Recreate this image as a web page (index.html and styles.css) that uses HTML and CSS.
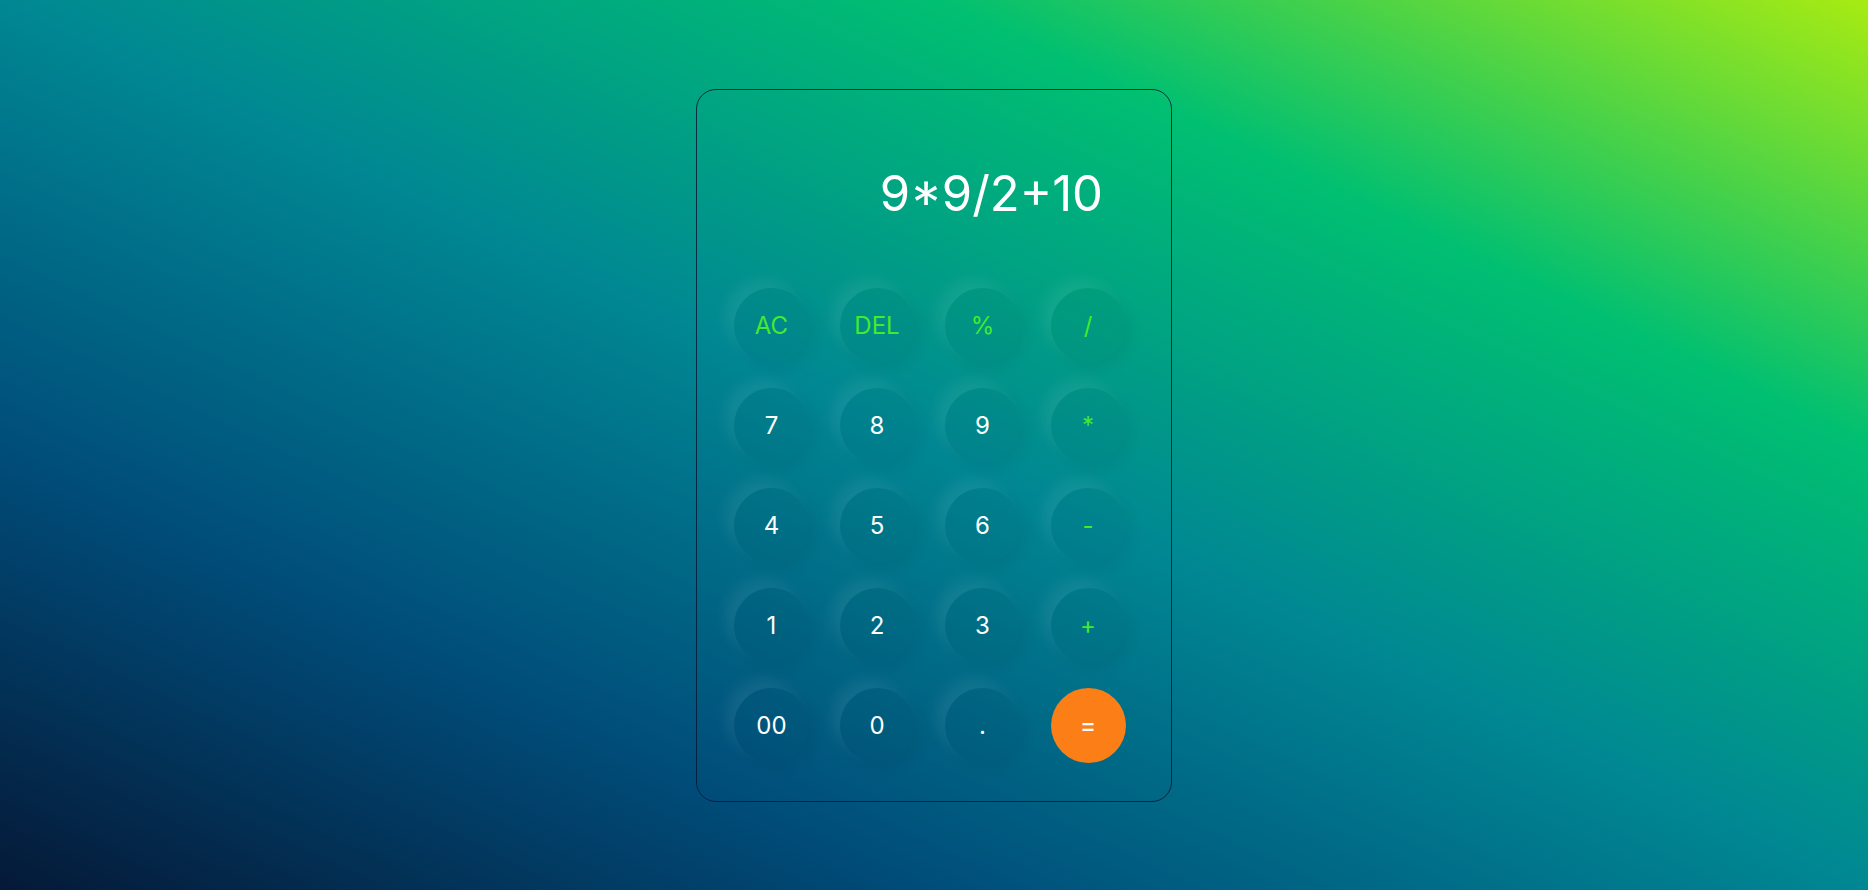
FILE: index.html
```html
<!DOCTYPE html>
<html lang="en">
<head>
<meta charset="utf-8">
<title>Calculator</title>
<link rel="stylesheet" href="styles.css">
</head>
<body>
<div class="page">
  <div class="calc">
    <div class="display">9*9/2+10</div>
    <div class="keys">
      <button class="key op">AC</button>
      <button class="key op">DEL</button>
      <button class="key op">%</button>
      <button class="key op">/</button>
      <button class="key">7</button>
      <button class="key">8</button>
      <button class="key">9</button>
      <button class="key op">*</button>
      <button class="key">4</button>
      <button class="key">5</button>
      <button class="key">6</button>
      <button class="key op">-</button>
      <button class="key">1</button>
      <button class="key">2</button>
      <button class="key">3</button>
      <button class="key op">+</button>
      <button class="key">00</button>
      <button class="key">0</button>
      <button class="key">.</button>
      <button class="key equal">=</button>
    </div>
  </div>
</div>
</body>
</html>
```
FILE: styles.css
```css
* { box-sizing: border-box; }
html, body { margin: 0; padding: 0; }
body {
  font-family: "Inter", "Lato", sans-serif;
  min-height: 100vh;
  background-image: linear-gradient(to right top, #051937, #004d7a, #008793, #00bf72, #a8eb12);
  background-attachment: fixed;
}
.page {
  height: 890px;
  display: flex;
  justify-content: center;
  padding-top: 89px;
}
.calc {
  width: 476px;
  height: 713px;
  border: 1px solid rgba(5, 25, 55, 0.85);
  border-radius: 20px;
  display: flex;
  flex-direction: column;
}
.display {
  color: #fff;
  font-size: 49px;
  font-weight: 400;
  text-align: right;
  line-height: 60px;
  padding: 74px 68px 0 0;
  height: 197.5px;
}
.keys {
  display: grid;
  grid-template-columns: repeat(4, 75px);
  grid-auto-rows: 75px;
  column-gap: 30.5px;
  row-gap: 25px;
  padding-left: 37px;
}
.key {
  width: 75px;
  height: 75px;
  border: none;
  border-radius: 50%;
  background: rgba(0, 0, 0, 0.03);
  color: #fff;
  font-family: inherit;
  font-size: 24px;
  font-weight: 400;
  padding: 0;
  display: flex;
  align-items: center;
  justify-content: center;
  box-shadow: -9px -9px 14px rgba(255, 255, 255, 0.07), 6px 6px 14px rgba(0, 0, 0, 0.05);
}
.op { color: #45ea2c; font-size: 24px; }
.equal {
  background: #fb7e17;
  color: #fff;
  font-weight: 500;
  box-shadow: none;
}
```
